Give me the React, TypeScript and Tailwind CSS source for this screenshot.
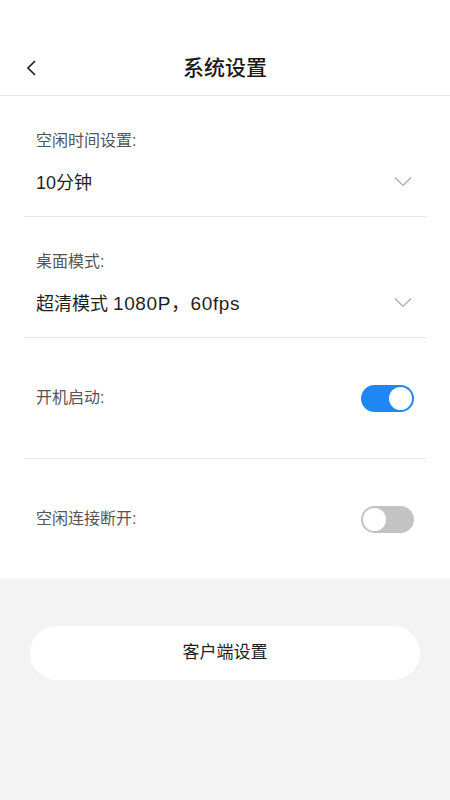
import React from "react";

const font = { fontFamily: '"Liberation Sans", "Noto Sans CJK SC", sans-serif' };

function Chevron() {
  return (
    <svg width="18" height="11" viewBox="0 0 18 11" fill="none">
      <path d="M1 1.5L9 9.5L17 1.5" stroke="#a8a8a8" strokeWidth="1.2" />
    </svg>
  );
}

function Toggle({ on }: { on: boolean }) {
  return on ? (
    <div className="w-[53px] h-[27px] rounded-full bg-[#1f87f4] flex items-center justify-end p-[2px]">
      <div className="w-[23px] h-[23px] rounded-full bg-white" />
    </div>
  ) : (
    <div className="w-[53px] h-[27px] rounded-full bg-[#c3c3c3] flex items-center justify-start p-[2px]">
      <div className="w-[23px] h-[23px] rounded-full bg-white" />
    </div>
  );
}

export default function App() {
  return (
    <div className="w-[450px] h-[800px] bg-[#f3f3f3] flex flex-col" style={font}>
      <div className="bg-white">
        <div className="pt-[40px] h-[96px] border-b border-[#e6e6e6]">
          <div className="relative h-[55px] flex items-center justify-center">
            <svg className="absolute left-[26px] top-[20px]" width="11" height="16" viewBox="0 0 11 16" fill="none">
              <path d="M9 1L2 8L9 15" stroke="#222" strokeWidth="1.7" />
            </svg>
            <span className="text-[21px] font-medium text-[#1a1a1a] leading-none">系统设置</span>
          </div>
        </div>
        <div className="mx-[24px]">
          <div className="border-b border-[#e6e6e6] px-[12px] h-[121px] pt-[34px] flex flex-col gap-[18px]">
            <div className="text-[16px] leading-[22px] text-[#555]">空闲时间设置:</div>
            <div className="flex items-center justify-between">
              <span className="text-[18px] leading-[26px] text-[#1f1f1f]">10分钟</span>
              <span className="mr-[2px] mt-[-4px]"><Chevron /></span>
            </div>
          </div>
          <div className="border-b border-[#e6e6e6] px-[12px] h-[121px] pt-[34px] flex flex-col gap-[18px]">
            <div className="text-[16px] leading-[22px] text-[#555]">桌面模式:</div>
            <div className="flex items-center justify-between">
              <span className="text-[18px] leading-[26px] text-[#1f1f1f]">
                超清模式 <span className="tracking-[0.6px] text-[19px]">1080P，60fps</span>
              </span>
              <span className="mr-[2px] mt-[-4px]"><Chevron /></span>
            </div>
          </div>
          <div className="border-b border-[#e6e6e6] px-[12px] h-[121px] flex items-center justify-between">
            <span className="text-[16px] text-[#555]">开机启动:</span>
            <Toggle on={true} />
          </div>
          <div className="px-[12px] h-[120px] flex items-center justify-between">
            <span className="text-[16px] text-[#555]">空闲连接断开:</span>
            <Toggle on={false} />
          </div>
        </div>
      </div>
      <div className="mt-[47px] mx-[30px] h-[54px] rounded-full bg-white flex items-center justify-center">
        <span className="text-[17px] text-[#222]">客户端设置</span>
      </div>
    </div>
  );
}
